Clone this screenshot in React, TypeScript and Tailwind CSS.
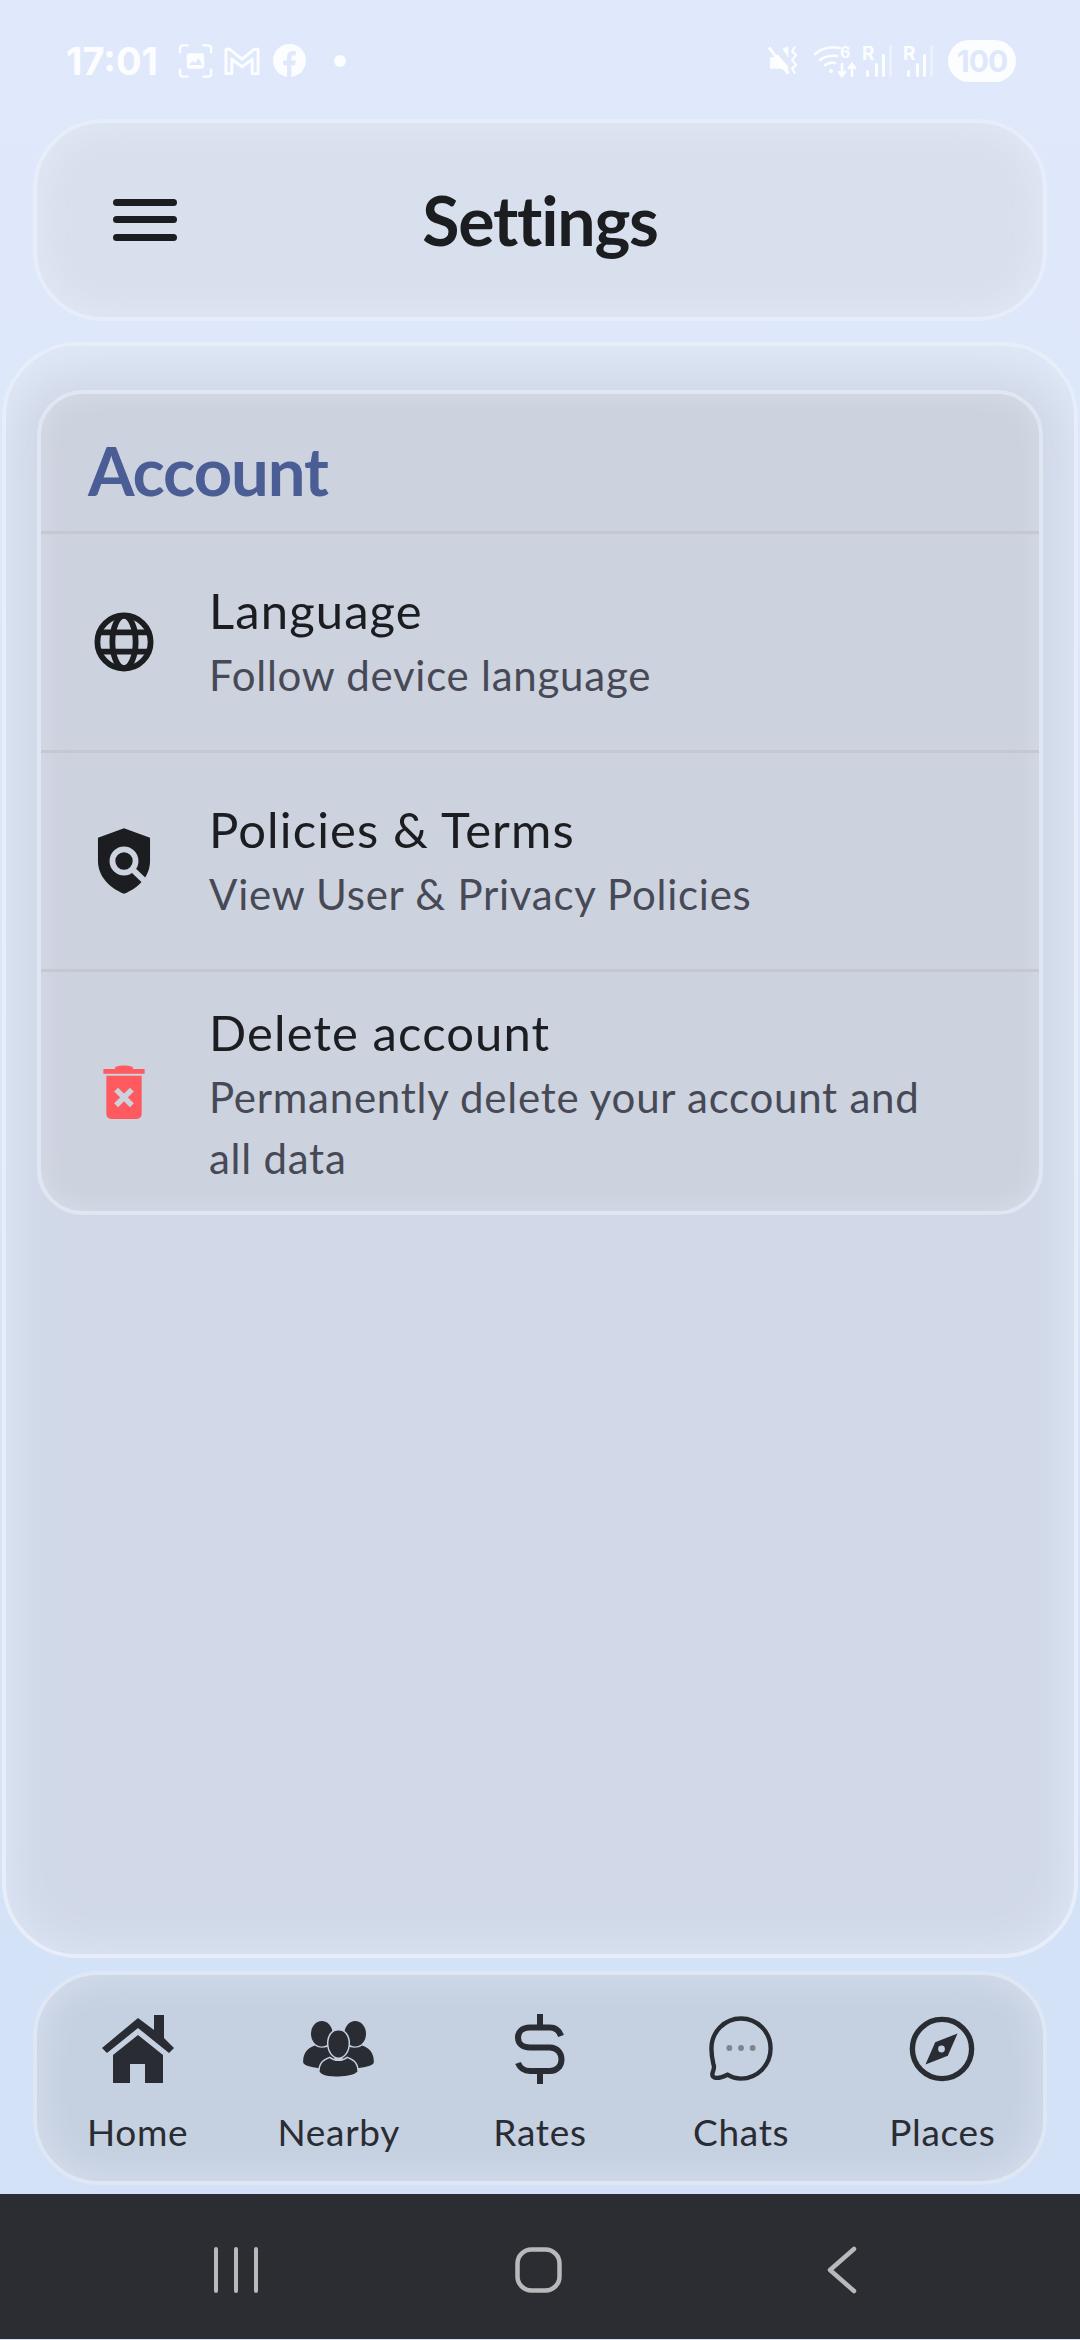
import type { ReactNode } from "react";

const font = "font-['Lato','Liberation_Sans',sans-serif]";

const StatusLeft = () => (
  <div className="flex items-center text-white/90">
    <span className="font-['Inter',sans-serif] text-[38px] font-bold leading-none">17:01</span>
    <svg className="ml-[20px]" width="35" height="36" viewBox="0 0 36 36" fill="none" stroke="currentColor" strokeWidth="2.4" strokeLinecap="round">
      <path d="M2 9V5a3 3 0 0 1 3-3h5M26 2h5a3 3 0 0 1 3 3v4M34 27v4a3 3 0 0 1-3 3h-5M10 34H5a3 3 0 0 1-3-3v-4" />
      <rect x="9" y="10" width="18" height="16" rx="3" fill="currentColor" stroke="none" />
      <path d="M11 22l4-4 3 2 3-5 4 7z" fill="#dfe9fb" stroke="none" />
    </svg>
    <svg className="ml-[11px]" width="36" height="30" viewBox="0 0 37 30" fill="none" stroke="currentColor" strokeWidth="3" strokeLinejoin="round">
      <path d="M2 28V3h4l12.500 10L31 3h4v25h-6V13L18.500 21 8 13v15z" />
    </svg>
    <svg className="ml-[13px]" width="33" height="33" viewBox="0 0 34 34">
      <circle cx="17" cy="17" r="17" fill="currentColor" />
      <path d="M14.500 34V22H10.500v-5h4v-3.500c0-4 2.400-6.200 6-6.200 1.500 0 3 .3 3 .3v4h-1.900c-2 0-2.600 1.200-2.600 2.500V17h4.400l-.7 5h-3.700v12z" fill="#dfe9fb" />
    </svg>
    <div className="ml-[28px] h-3 w-3 rounded-full bg-white/90" />
  </div>
);

const Signal = () => (
  <svg className="overflow-visible" width="30" height="34" viewBox="0 0 30 34" fill="currentColor">
    <text x="0" y="16" fontSize="19" fontWeight="700" fontFamily="Inter, sans-serif">R</text>
    <rect x="4" y="26" width="3" height="7" rx="1.500" />
    <rect x="13" y="19" width="3" height="14" rx="1.500" />
    <rect x="20" y="10" width="3" height="23" rx="1.500" />
    <rect x="27" y="1" width="3" height="32" rx="1.500" opacity=".4" />
  </svg>
);

const StatusRight = () => (
  <div className="flex items-center text-white/90">
    <svg width="30" height="32" viewBox="0 0 31 32" fill="currentColor">
      <path d="M2 12h5l3-3 11 13v7l-7-5H2zM15 3l6-2v12z" />
      <path d="M1 2l20 27" stroke="currentColor" strokeWidth="3" />
      <path d="M28 1l-3 5 4 4-4 5 4 5-4 4 3 5" fill="none" stroke="currentColor" strokeWidth="2.200" />
    </svg>
    <svg className="ml-[15px] overflow-visible" width="42" height="34" viewBox="0 0 40 34" fill="none" stroke="currentColor" strokeWidth="2.600" strokeLinecap="round">
      <path d="M1 10c7-6 15-8 25-6M6 16c5-4 10-5 17-4M11 21c3-2 6-3 10-2" />
      <circle cx="17" cy="27" r="2" fill="currentColor" stroke="none" />
      <path d="M28 20v12m-3-4l3 4 3-4M38 32V20m-3 4l3-4 3 4" />
      <text x="26" y="14" fontSize="16" fontWeight="700" fontFamily="Inter, sans-serif" fill="currentColor" stroke="none">6</text>
    </svg>
    <div className="ml-[7px] flex gap-[11px]">
      <Signal />
      <Signal />
    </div>
    <div className="ml-[15px] flex h-[42px] w-[68px] items-center justify-center rounded-full bg-white/90">
      <span className="font-['Inter',sans-serif] text-[30px] font-bold leading-none tracking-[-1px] text-[#dfe8fb]">100</span>
    </div>
  </div>
);

const GlobeIcon = () => (
  <svg width="60" height="60" viewBox="0 0 62 62" fill="none" stroke="#1c1d20" strokeWidth="6">
    <circle cx="31" cy="31" r="27.500" />
    <ellipse cx="31" cy="31" rx="12" ry="27" />
    <path d="M5 21h52M5 41h52" />
  </svg>
);

const ShieldIcon = () => (
  <svg width="54" height="66" viewBox="0 0 56 68">
    <path d="M28 0l27 10v24c0 16-12 28-27 34C13 62 1 50 1 34V10z" fill="#1c1d20" />
    <circle cx="28" cy="34" r="12" fill="none" stroke="#cdd3de" strokeWidth="6" />
    <path d="M37 43l19 18" stroke="#cdd3de" strokeWidth="6" />
  </svg>
);

const TrashIcon = () => (
  <svg width="42" height="55" viewBox="0 0 42 56" fill="#ff5a5f">
    <path d="M12 3q9-3 18 0v2h12v5H0V5h12z" />
    <path d="M3 12h36v39a5 5 0 0 1-5 5H8a5 5 0 0 1-5-5z" />
    <path d="M13 26l16 16M29 26L13 42" stroke="#cdd3de" strokeWidth="5.500" />
  </svg>
);

const HomeIcon = () => (
  <svg width="72" height="68" viewBox="0 0 72 68" fill="#2a2c33">
    <path d="M36 3l16 12V0h10v23l10 10-5 5L36 13 5 38l-5-5z" />
    <path d="M36 20l25 20v28H43V49H28v19H11V40z" />
  </svg>
);

const PeopleIcon = () => (
  <svg width="73" height="57" viewBox="0 0 72 58" fill="#2a2c33">
    <ellipse cx="19" cy="13" rx="11" ry="13" />
    <ellipse cx="53" cy="13" rx="11" ry="13" />
    <path d="M0 42c0-8 3-14 12-17 4 3 11 3 15 0l8 10-15 14C12 47 0 46 0 42z" />
    <path d="M72 42c0-8-3-14-12-17-4 3-11 3-15 0l-8 10 15 14c8-2 20-3 20-7z" />
    <path d="M36 9c7 0 11 6 11 14s-5 15-11 15-11-7-11-15S29 9 36 9z" stroke="#c5d0e0" strokeWidth="1.500" />
    <path d="M16 52c0-8 3-12 11-15 5 4 13 4 18 0 8 3 11 7 11 15-6 6-34 8-40 0z" stroke="#c5d0e0" strokeWidth="1.500" />
  </svg>
);

const DollarIcon = () => (
  <svg width="50" height="70" viewBox="0 0 50 70" fill="none" stroke="#2a2c33" strokeWidth="6">
    <path d="M25 0v13M25 57v13" />
    <path d="M46 22C44 16 40 13.500 35 13.500H15C7 13.500 3 18 3 23.500S7 33.500 15 33.500H35C42 33.500 46.500 39 46.500 45.500S42 57 35 57H15C9 57 5 54 3 49" />
  </svg>
);

const ChatIcon = () => (
  <svg width="64" height="66" viewBox="0 0 66 68" fill="none">
    <path d="M33 2.500c17 0 30.500 14 30.500 31s-13.500 31-30.500 31c-6 0-10-1.500-14-4-4 2-9 4-13 3-3-1-3-3-2-6 1-3 2-5 .5-8C3.500 45 2.500 40 2.500 33.500 2.500 16.500 16 2.500 33 2.500z" stroke="#2a2c33" strokeWidth="4.500" />
    <circle cx="21" cy="33" r="3" fill="#7d8390" />
    <circle cx="33" cy="33" r="3" fill="#7d8390" />
    <circle cx="45" cy="33" r="3" fill="#7d8390" />
  </svg>
);

const CompassIcon = () => (
  <svg width="66" height="66" viewBox="0 0 68 68" fill="none">
    <circle cx="34" cy="34" r="30.500" stroke="#2a2c33" strokeWidth="5.500" />
    <path d="M50 18L40 41 17 50l10-23z" fill="#2a2c33" />
    <circle cx="33.500" cy="34" r="3.500" fill="#c5d0e0" />
  </svg>
);

const Row = ({ icon, title, sub, last }: { icon: ReactNode; title: string; sub: string; last?: boolean }) => (
  <div className={`flex items-center ${last ? "h-[239px]" : "h-[219px] border-b-[3px] border-[#c5c7d3]"}`}>
    <div className="flex w-[168px] shrink-0 justify-center pr-[2px]">{icon}</div>
    <div className={`pr-[110px] ${last ? "pt-[6px]" : ""}`}>
      <div className="mb-[4px] text-[49px] leading-[62px] tracking-[1.1px] text-[#1c1d20]">{title}</div>
      <div className="text-[42px] leading-[61px] tracking-[.75px] text-[#474a56]">{sub}</div>
    </div>
  </div>
);

const NavItem = ({ icon, label }: { icon: ReactNode; label: string }) => (
  <div className="flex flex-col items-center">
    <div className="flex h-[72px] items-center justify-center">{icon}</div>
    <span className="mt-[25px] text-[37px] leading-[44px] tracking-[.7px] text-[#2a2c33]">{label}</span>
  </div>
);

const App = () => (
  <div className={`${font} flex h-[2340px] w-[1080px] flex-col overflow-hidden bg-linear-to-b from-[#e0e9fb] to-[#d2e1f7]`}>
    <div className="flex h-[119px] shrink-0 items-center justify-between pl-[66px] pr-[64px] pt-[2px]">
      <StatusLeft />
      <StatusRight />
    </div>

    <div className="relative mx-[33px] flex h-[202px] shrink-0 items-center justify-center rounded-[70px] border-[4px] border-[#e7edf9] bg-[#d9e0ed] shadow-[inset_0_0_40px_rgba(228,235,248,0.9)]">
      <svg className="absolute left-[76px] top-[76px]" width="64" height="42" viewBox="0 0 64 42" fill="#1c1d20">
        <rect width="64" height="7" y="0" rx="3.500" />
        <rect width="64" height="7" y="17" rx="3.500" />
        <rect width="64" height="7" y="35" rx="3.500" />
      </svg>
      <h1 className="text-[68px] font-bold leading-none tracking-[-1.2px] text-[#1c1d20]">Settings</h1>
    </div>

    <div className="mx-[2px] mt-[21px] flex h-[1616px] shrink-0 flex-col rounded-[76px] border-[4px] border-[#e7edf9] bg-[#d1d9e8] px-[31px] pt-[44px] shadow-[inset_0_0_50px_rgba(222,232,249,0.95),inset_0_40px_50px_-20px_rgba(226,234,248,0.9)]">
      <div className="rounded-[46px] border-[4px] border-[#e0e6f2] bg-[#ccd2de] shadow-[inset_0_0_30px_rgba(218,224,236,0.8)]">
        <div className="flex h-[140px] items-center border-b-[3px] border-[#c5c7d3] pl-[47px] pt-[15px]">
          <h2 className="text-[67px] font-bold leading-none tracking-[-1.1px] text-[#4a5d94]">Account</h2>
        </div>
        <Row icon={<GlobeIcon />} title="Language" sub="Follow device language" />
        <Row icon={<ShieldIcon />} title="Policies & Terms" sub="View User & Privacy Policies" />
        <Row icon={<TrashIcon />} title="Delete account" sub="Permanently delete your account and all data" last />
      </div>
    </div>

    <div className="mx-[33px] mt-[13px] grid h-[214px] shrink-0 grid-cols-5 rounded-[66px] border-[4px] border-[#dfe7f5] bg-[#c5d0e0] pt-[38px] shadow-[inset_0_0_40px_rgba(218,226,240,0.95)]">
      <NavItem icon={<HomeIcon />} label="Home" />
      <NavItem icon={<PeopleIcon />} label="Nearby" />
      <NavItem icon={<DollarIcon />} label="Rates" />
      <NavItem icon={<ChatIcon />} label="Chats" />
      <NavItem icon={<CompassIcon />} label="Places" />
    </div>

    <div className="mt-[9px] flex h-[145px] shrink-0 items-center bg-[#2b2d33] pl-[214px] pt-[7px]">
      <svg width="44" height="46" viewBox="0 0 44 46" stroke="#b9b9bc" strokeWidth="4" strokeLinecap="round">
        <path d="M2 2v42M22 2v42M42 2v42" />
      </svg>
      <svg className="ml-[257px]" width="47" height="46" viewBox="0 0 47 46" fill="none" stroke="#b9b9bc" strokeWidth="4.500">
        <rect x="2.500" y="2.500" width="42" height="41" rx="14" />
      </svg>
      <svg className="ml-[265px]" width="30" height="48" viewBox="0 0 30 48" fill="none" stroke="#b9b9bc" strokeWidth="4.500" strokeLinecap="round" strokeLinejoin="round">
        <path d="M27 3L3 24l24 21" />
      </svg>
    </div>
  </div>
);

export default App;
